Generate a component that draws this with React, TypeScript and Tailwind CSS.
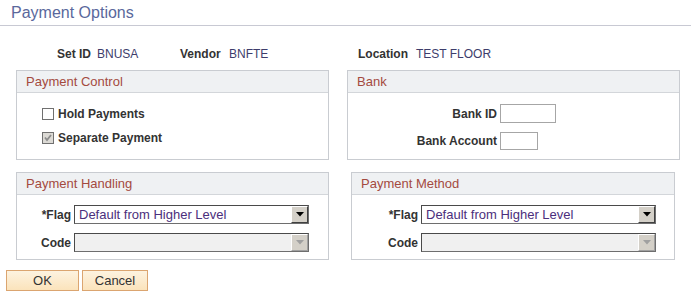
import React from 'react';

const font = { fontFamily: '"Liberation Sans", Arial, sans-serif' };

const GroupBox: React.FC<{ title: string; className: string; children: React.ReactNode }> = ({ title, className, children }) => (
    <div className={`border border-[#c9ccd1] bg-white ${className}`}>
        <div className="h-[22px] bg-[#eff1f3] border-b border-[#d3d6da] pl-[9px] text-[13px] leading-[21px] text-[#a44a3f]">
            {title}
        </div>
        {children}
    </div>
);

const Select: React.FC<{ value?: string; disabled?: boolean; width: string }> = ({ value, disabled, width }) => (
    <div className={`${width} h-[19px] flex border border-[#6e6e6e] border-t-[#4a4a4a] border-l-[#4a4a4a] ${disabled ? 'bg-[#f0f0f0]' : 'bg-white'}`}>
        <div className="flex-1 pl-[4px] text-[13px] font-normal leading-[17px] text-[#4b2f7c] truncate">{value}</div>
        <div className={`w-[17px] h-[17px] flex items-center justify-center bg-[#d4d0c8] border border-t-white border-l-white ${disabled ? 'border-r-[#a0a0a0] border-b-[#a0a0a0]' : 'border-r-[#404040] border-b-[#404040]'}`}>
            <svg width="8" height="5" viewBox="0 0 8 5">
                <polygon points="0,0 8,0 4,4.5" fill={disabled ? '#a0a0a0' : '#000'} />
            </svg>
        </div>
    </div>
);

const Checkbox: React.FC<{ checked?: boolean; disabled?: boolean }> = ({ checked, disabled }) => (
    <div className={`w-[12px] h-[12px] border border-[#707070] flex items-center justify-center ${disabled ? 'bg-[#dcdad5] border-[#9a9a9a]' : 'bg-white'}`}>
        {checked && (
            <svg width="8" height="8" viewBox="0 0 8 8">
                <polyline points="1,3.5 3,6 7,1" fill="none" stroke="#8c8c8c" strokeWidth="1.8" />
            </svg>
        )}
    </div>
);

const App: React.FC = () => {
    return (
        <div className="w-[691px] h-[299px] bg-white overflow-hidden" style={font}>
            {/* Title */}
            <div className="h-[26px] border-b border-[#c8c9d3] pl-[11px] pt-[3px] text-[16px] leading-[19px] text-[#5a689c]">
                Payment Options
            </div>

            {/* Key fields */}
            <div className="flex mt-[21px] h-[15px] text-[12px] leading-[15px]">
                <span className="ml-[57px] w-[40px] font-bold text-[#333]">Set ID</span>
                <span className="w-[83px] text-[#3d3d6b]">BNUSA</span>
                <span className="w-[49px] font-bold text-[#333]">Vendor</span>
                <span className="w-[129px] text-[#3d3d6b]">BNFTE</span>
                <span className="w-[58px] font-bold text-[#333]">Location</span>
                <span className="text-[#3d3d6b]">TEST FLOOR</span>
            </div>

            {/* Row 1 */}
            <div className="flex mt-[8px]">
                <GroupBox title="Payment Control" className="ml-[16px] w-[313px] h-[90px]">
                    <div className="pl-[25px] pt-[14px] flex flex-col gap-[11px] text-[12px] font-bold text-[#333]">
                        <div className="flex items-center gap-[4px] h-[13px]">
                            <Checkbox />
                            <span>Hold Payments</span>
                        </div>
                        <div className="flex items-center gap-[4px] h-[13px]">
                            <Checkbox checked disabled />
                            <span>Separate Payment</span>
                        </div>
                    </div>
                </GroupBox>
                <GroupBox title="Bank" className="ml-[18px] w-[333px] h-[90px]">
                    <div className="pt-[11px] flex flex-col gap-[9px] text-[12px] font-bold text-[#333]">
                        <div className="flex items-center h-[19px]">
                            <span className="w-[152px] text-right pr-[3px]">Bank ID</span>
                            <div className="w-[56px] h-[19px] border border-[#a6a6a6] bg-white" />
                        </div>
                        <div className="flex items-center h-[18px]">
                            <span className="w-[152px] text-right pr-[3px]">Bank Account</span>
                            <div className="w-[38px] h-[18px] border border-[#a6a6a6] bg-white" />
                        </div>
                    </div>
                </GroupBox>
            </div>

            {/* Row 2 */}
            <div className="flex mt-[12px]">
                <GroupBox title="Payment Handling" className="ml-[16px] w-[313px] h-[88px]">
                    <div className="pt-[10px] flex flex-col gap-[9px] text-[12px] font-bold text-[#333]">
                        <div className="flex items-center">
                            <span className="w-[57px] text-right pr-[3px]">*Flag</span>
                            <Select width="w-[235px]" value="Default from Higher Level" />
                        </div>
                        <div className="flex items-center">
                            <span className="w-[57px] text-right pr-[3px]">Code</span>
                            <Select width="w-[235px]" disabled />
                        </div>
                    </div>
                </GroupBox>
                <GroupBox title="Payment Method" className="ml-[22px] w-[324px] h-[88px]">
                    <div className="pt-[10px] flex flex-col gap-[9px] text-[12px] font-bold text-[#333]">
                        <div className="flex items-center">
                            <span className="w-[69px] text-right pr-[3px]">*Flag</span>
                            <Select width="w-[235px]" value="Default from Higher Level" />
                        </div>
                        <div className="flex items-center">
                            <span className="w-[69px] text-right pr-[3px]">Code</span>
                            <Select width="w-[235px]" disabled />
                        </div>
                    </div>
                </GroupBox>
            </div>

            {/* Buttons */}
            <div className="flex gap-[3px] ml-[6px] mt-[10px]">
                <button className="w-[73px] h-[21px] border border-[#dba570] bg-gradient-to-b from-[#fdf3e0] to-[#fbe3bb] text-[13px] leading-[19px] text-[#333]">
                    OK
                </button>
                <button className="w-[66px] h-[21px] border border-[#dba570] bg-gradient-to-b from-[#fdf3e0] to-[#fbe3bb] text-[13px] leading-[19px] text-[#333]">
                    Cancel
                </button>
            </div>
        </div>
    );
};

export default App;
